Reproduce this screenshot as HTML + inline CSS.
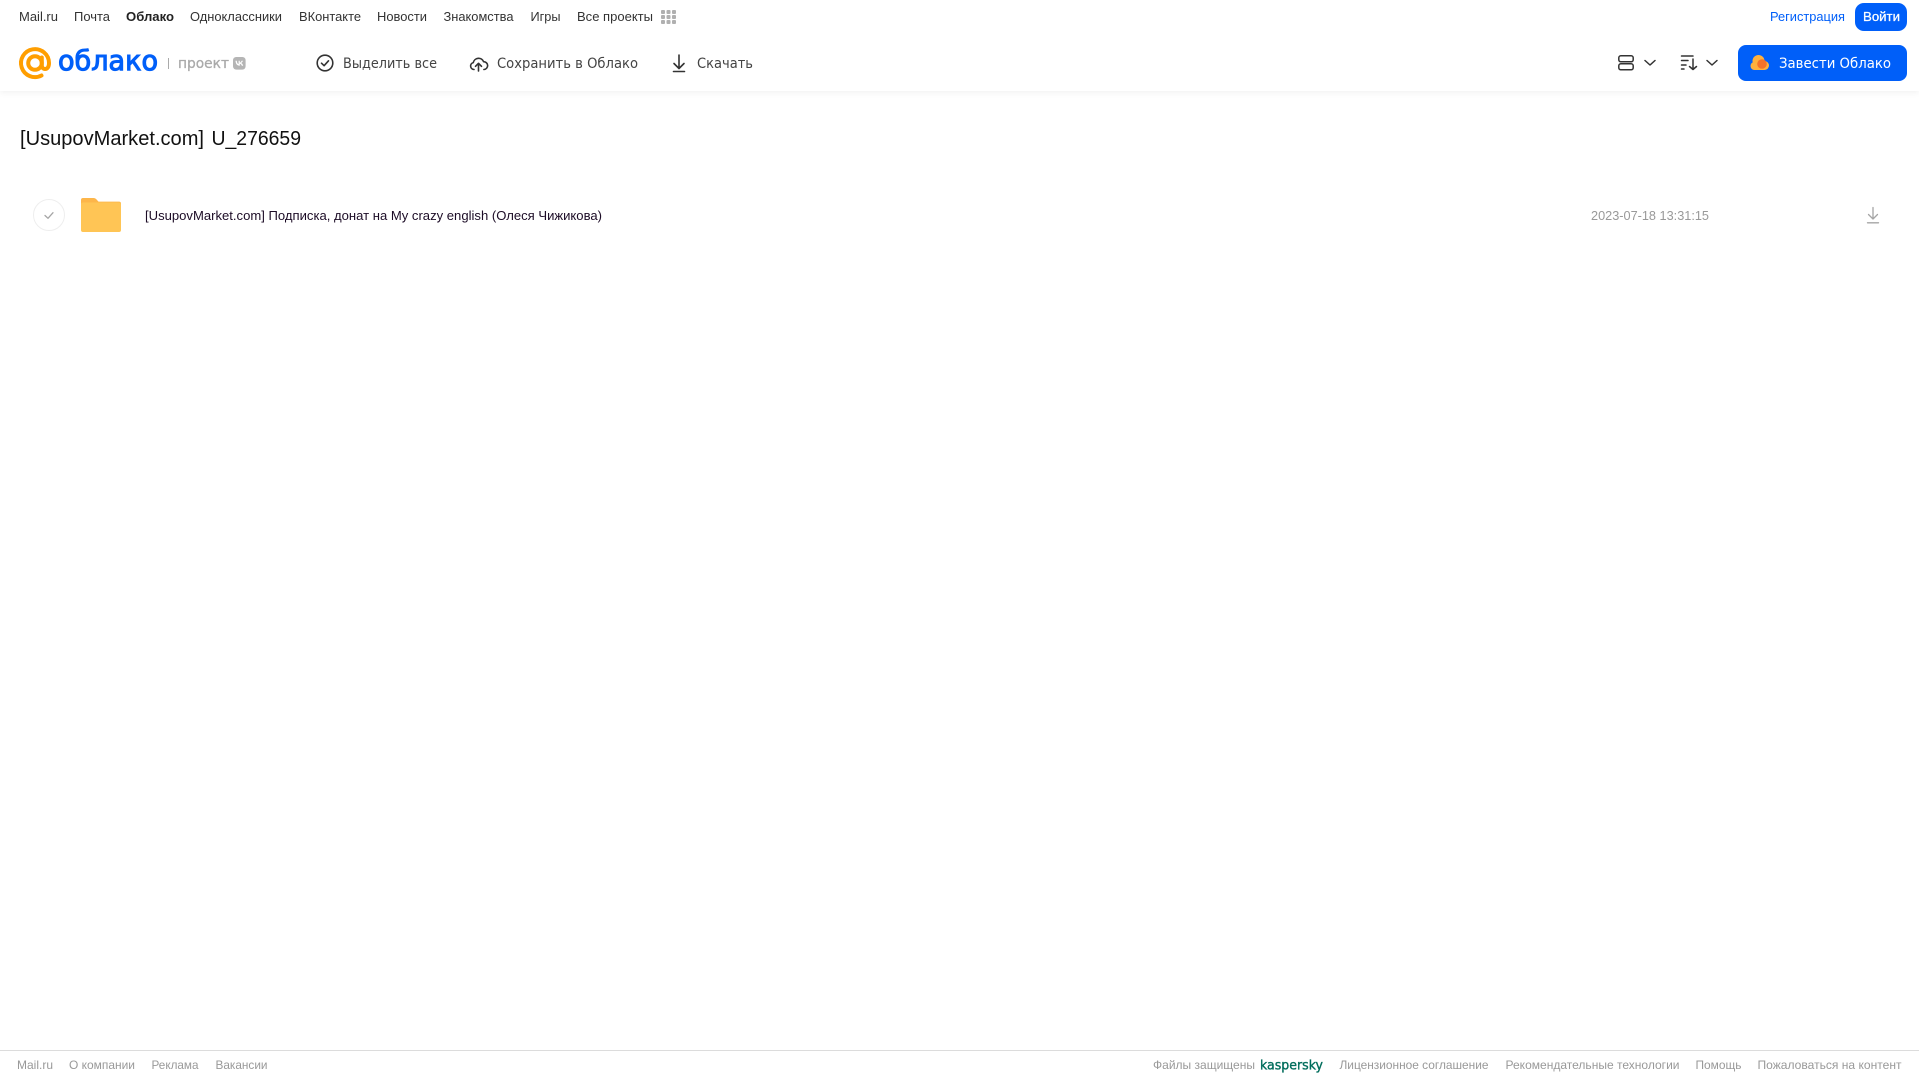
<!DOCTYPE html>
<html lang="ru">
<head>
<meta charset="utf-8">
<title>Облако</title>
<style>
html,body{margin:0;padding:0;background:#fff;width:1919px;height:1079px;overflow:hidden}
#hdr{position:absolute;left:0;top:0;width:1919px;height:91px;background:#fff;box-shadow:0 1px 7px rgba(0,0,0,.07)}
#ft{position:absolute;left:0;top:1050px;width:1919px;height:1px;background:#dcdcdc}
svg{position:absolute;left:0;top:0}
text{font-family:"Liberation Sans",sans-serif}
.n{font-size:13px;fill:#333}
.t{font-size:14px;fill:#444;font-family:"DejaVu Sans",sans-serif}
.f{font-size:12px;fill:#999}
</style>
</head>
<body>
<div id="hdr"></div>
<div id="ft"></div>
<svg width="1919" height="1079" viewBox="0 0 1919 1079" xmlns="http://www.w3.org/2000/svg">
<!-- top nav -->
<text class="n" x="19" y="21" textLength="39" lengthAdjust="spacingAndGlyphs">Mail.ru</text>
<text class="n" x="74" y="21" textLength="36" lengthAdjust="spacingAndGlyphs">Почта</text>
<text class="n" x="126" y="21" textLength="48" lengthAdjust="spacingAndGlyphs" font-weight="700" style="fill:#222">Облако</text>
<text class="n" x="190" y="21" textLength="92" lengthAdjust="spacingAndGlyphs">Одноклассники</text>
<text class="n" x="299" y="21" textLength="62" lengthAdjust="spacingAndGlyphs">ВКонтакте</text>
<text class="n" x="377" y="21" textLength="50" lengthAdjust="spacingAndGlyphs">Новости</text>
<text class="n" x="443.5" y="21" textLength="70" lengthAdjust="spacingAndGlyphs">Знакомства</text>
<text class="n" x="530.5" y="21" textLength="30" lengthAdjust="spacingAndGlyphs">Игры</text>
<text class="n" x="577" y="21" textLength="76" lengthAdjust="spacingAndGlyphs">Все проекты</text>
<g fill="#b0b0b0">
<rect x="661" y="10" width="4" height="4" rx="1"/><rect x="666.500" y="10" width="4" height="4" rx="1"/><rect x="672" y="10" width="4" height="4" rx="1"/>
<rect x="661" y="15" width="4" height="4" rx="1"/><rect x="666.500" y="15" width="4" height="4" rx="1"/><rect x="672" y="15" width="4" height="4" rx="1"/>
<rect x="661" y="20" width="4" height="4" rx="1"/><rect x="666.500" y="20" width="4" height="4" rx="1"/><rect x="672" y="20" width="4" height="4" rx="1"/>
</g>
<text class="n" x="1770" y="21" textLength="75" lengthAdjust="spacingAndGlyphs" style="fill:#005ff9">Регистрация</text>
<rect x="1855" y="3" width="52" height="28" rx="9" fill="#005ff9"/>
<text class="n" x="1863" y="21" textLength="37" lengthAdjust="spacingAndGlyphs" stroke="#fff" stroke-width=".25" style="fill:#fff">Войти</text>

<!-- logo -->
<g fill="none" stroke="#ff9e00" stroke-width="4" stroke-linecap="round">
<circle cx="35" cy="63" r="6.800"/>
<path d="M41.500 75.500A14 14 0 1 1 49 63C49 66.500 47.600 69 45 69C43 69 41.800 67.500 41.800 65V57.500"/>
</g>
<text x="58" y="70" font-size="28" textLength="100" lengthAdjust="spacingAndGlyphs" fill="#005ff9" stroke="#005ff9" stroke-width="1.100" style="font-family:'DejaVu Sans',sans-serif">облако</text>
<rect x="168" y="58" width="1" height="11" fill="#aaa"/>
<text x="178" y="68" font-size="14" textLength="51" lengthAdjust="spacingAndGlyphs" fill="#aaa" stroke="#aaa" stroke-width=".3" style="font-family:'DejaVu Sans',sans-serif">проект</text>
<rect x="233" y="57" width="12.600" height="12.600" rx="3.200" fill="#b5b5b5"/>
<path d="M235.500 60.800c.2 3.200 1.700 5 4.300 5v-2c1 .1 1.700.9 2 2h1.400c-.3-1.400-1-2.300-2-2.800.9-.5 1.500-1.300 1.700-2.200h-1.300c-.3.9-1 1.700-1.800 1.800v-1.800h-1.200v3.300c-.9-.2-1.700-1.200-1.800-3.300z" fill="#fff"/>

<!-- toolbar -->
<g fill="none" stroke="#333" stroke-width="1.600" stroke-linecap="round" stroke-linejoin="round">
<circle cx="325" cy="63" r="7.800"/>
<path d="M321.500 63.200l2.600 2.500 4.400-4.900"/>
<path d="M474 69.500a3.500 3.500 0 0 1-.7-6.900 5.400 5.400 0 0 1 10.300-.9 3.900 3.900 0 0 1 .3 7.800"/>
<path d="M478.500 71V63.500M475.500 66.300l3-3 3 3"/>
<path d="M679 55V68M674 63.500l5 5 5-5"/>
<path d="M673.500 71.500H684.500"/>
</g>
<text class="t" x="343" y="68" textLength="94" lengthAdjust="spacingAndGlyphs">Выделить все</text>
<text class="t" x="497" y="68" textLength="141" lengthAdjust="spacingAndGlyphs">Сохранить в Облако</text>
<text class="t" x="697" y="68" textLength="56" lengthAdjust="spacingAndGlyphs">Скачать</text>

<!-- view + sort -->
<g fill="none" stroke="#333" stroke-width="1.500" stroke-linecap="round" stroke-linejoin="round">
<rect x="1618.800" y="55.800" width="14.400" height="6" rx="2"/>
<rect x="1618.800" y="63.800" width="14.400" height="6" rx="2"/>
<path d="M1645 60.500l5 4.500 5-4.500"/>
<path d="M1681.500 56H1693M1681.500 60.500H1688M1681.500 65H1686M1681.500 69H1684"/>
<path d="M1693 59V69.500M1689.500 66.500l3.500 3 3.500-3"/>
<path d="M1707 60.500l5 4.500 5-4.500"/>
</g>

<!-- CTA -->
<rect x="1738" y="45" width="169" height="36" rx="8" fill="#005ff9"/>
<g fill="#ffb13d">
<circle cx="1758.500" cy="61" r="6"/>
<circle cx="1754.500" cy="66" r="4"/>
<circle cx="1764.500" cy="65.500" r="4.500"/>
<rect x="1754.500" y="62" width="10" height="8"/>
</g>
<circle cx="1762" cy="64" r="4.800" fill="#f5722a"/>
<text class="t" x="1779" y="68" textLength="112" lengthAdjust="spacingAndGlyphs" style="fill:#fff">Завести Облако</text>

<!-- content -->
<text x="20" y="145" font-size="20" textLength="184" lengthAdjust="spacingAndGlyphs" fill="#111">[UsupovMarket.com]</text>
<text x="211.500" y="145" font-size="20" textLength="89.500" lengthAdjust="spacingAndGlyphs" fill="#111">U_276659</text>
<circle cx="49" cy="215" r="15.500" fill="#fff" stroke="#eee"/>
<path d="M45 215.500l3 2.800 5-5.600" fill="none" stroke="#a5a5a5" stroke-width="1.300" stroke-linecap="round" stroke-linejoin="round"/>
<path d="M83 198h10.500c1.400 0 2.500.6 3.500 2l1.500 1.600H119a2 2 0 0 1 2 2V206H81v-6a2 2 0 0 1 2-2z" fill="#fdb64a"/>
<rect x="81" y="202.500" width="40" height="29.500" rx="2" fill="#ffc555"/>
<text x="145" y="220" font-size="13" textLength="457" lengthAdjust="spacingAndGlyphs" fill="#1c0c26">[UsupovMarket.com] Подписка, донат на My crazy english (Олеся Чижикова)</text>
<text x="1591" y="220" font-size="13" textLength="118" lengthAdjust="spacingAndGlyphs" fill="#999">2023-07-18 13:31:15</text>
<g fill="none" stroke="#a5a5a5" stroke-width="1.300" stroke-linecap="round" stroke-linejoin="round">
<path d="M1873 207.500V219M1868.500 214.500l4.500 4.500 4.500-4.500"/>
<path d="M1867.500 222.800H1878.500"/>
</g>

<!-- footer -->
<text class="f" x="17" y="1069" textLength="36" lengthAdjust="spacingAndGlyphs">Mail.ru</text>
<text class="f" x="69" y="1069" textLength="66" lengthAdjust="spacingAndGlyphs">О компании</text>
<text class="f" x="151.500" y="1069" textLength="47" lengthAdjust="spacingAndGlyphs">Реклама</text>
<text class="f" x="215.500" y="1069" textLength="52" lengthAdjust="spacingAndGlyphs">Вакансии</text>
<text class="f" x="1153" y="1069" textLength="102" lengthAdjust="spacingAndGlyphs">Файлы защищены</text>
<text x="1260" y="1069.500" font-size="13" textLength="63" lengthAdjust="spacingAndGlyphs" fill="#006d5c" stroke="#006d5c" stroke-width=".35" style="font-family:'DejaVu Sans',sans-serif">kaspersky</text>
<text class="f" x="1339.500" y="1069" textLength="149" lengthAdjust="spacingAndGlyphs">Лицензионное соглашение</text>
<text class="f" x="1505.500" y="1069" textLength="174" lengthAdjust="spacingAndGlyphs">Рекомендательные технологии</text>
<text class="f" x="1695.500" y="1069" textLength="46" lengthAdjust="spacingAndGlyphs">Помощь</text>
<text class="f" x="1757.500" y="1069" textLength="144" lengthAdjust="spacingAndGlyphs">Пожаловаться на контент</text>
</svg>
</body>
</html>
